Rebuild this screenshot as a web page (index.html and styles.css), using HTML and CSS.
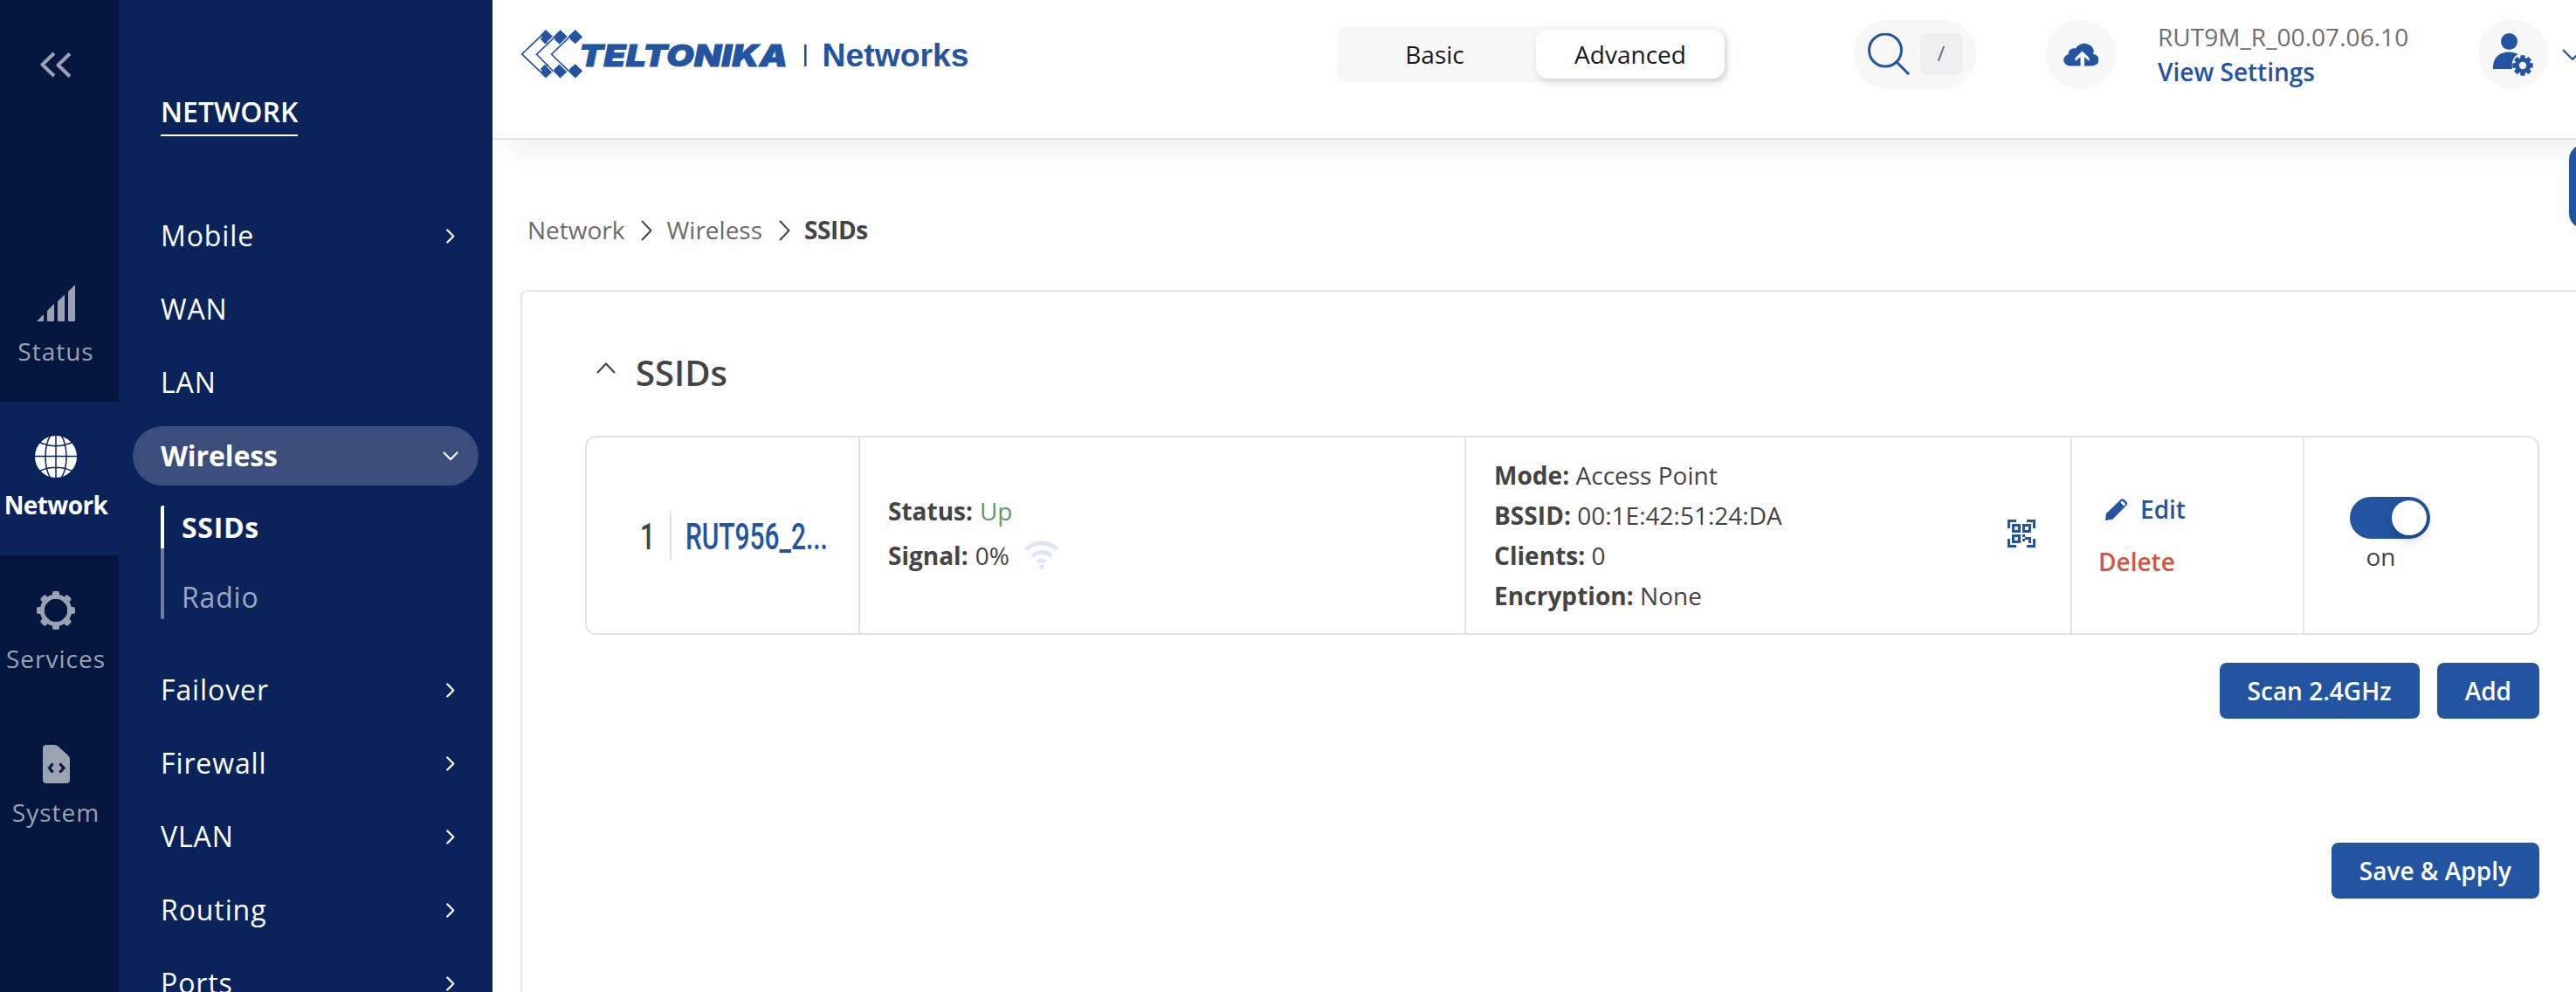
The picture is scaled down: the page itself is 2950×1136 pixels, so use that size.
FILE: index.html
```html
<!DOCTYPE html>
<html lang="en">
<head>
<meta charset="utf-8">
<title>Wireless SSIDs - Teltonika Networks</title>
<link rel="stylesheet" href="styles.css">
</head>
<body>
<svg width="0" height="0" class="defs" aria-hidden="true">
  <symbol id="chev-right" viewBox="0 0 10 17"><path d="M1.3 1.5 8.3 8.5 1.3 15.5" fill="none" stroke="currentColor" stroke-width="2.2" stroke-linecap="round" stroke-linejoin="round"/></symbol>
  <symbol id="crumb" viewBox="0 0 13 24"><path d="M1 1 11.5 12 1 23" fill="none" stroke="currentColor" stroke-width="2"/></symbol>
</svg>
<div class="app">
  <nav class="rail">
    <a class="collapse"><svg width="36" height="30" viewBox="0 0 36 30"><path d="M16 2 2.5 15 16 28M34 2.500 20.500 15.500 34 28.500" fill="none" stroke="currentColor" stroke-width="4" stroke-linejoin="round" stroke-linecap="butt"/></svg></a>
    <a class="rail-item">
      <span class="rail-icon"><svg width="45" height="42" viewBox="0 0 45 42"><path d="M0 42 8 34V41Q8 42 7 42ZM12 30 20 22V41Q20 42 19 42H13Q12 42 12 41ZM24 19 32 11.500V41Q32 42 31 42H25Q24 42 24 41ZM36 8 44 0V41Q44 42 43 42H37Q36 42 36 41Z" fill="currentColor"/></svg></span>
      <span>Status</span>
    </a>
    <a class="rail-item active">
      <span class="rail-icon"><svg width="48" height="48" viewBox="0 0 48 48"><circle cx="24" cy="24" r="24" fill="#fff"/><path d="M24 0V48M0 23.500H48M17.500 0Q12 9 12 24T17.500 48M30.500 0Q36 9 36 24T30.500 48M5 7.500Q24 16 43 7.500M5 40.500Q24 32 43 40.500" fill="none" stroke="#0b235b" stroke-width="1.500"/></svg></span>
      <span>Network</span>
    </a>
    <a class="rail-item">
      <span class="rail-icon"><svg width="46" height="46" viewBox="-23 -23 46 46"><g fill="currentColor"><g id="teeth"><rect x="-4" y="-22" width="8" height="9" rx="2"/><rect x="-4" y="13" width="8" height="9" rx="2"/><rect x="-22" y="-4" width="9" height="8" rx="2"/><rect x="13" y="-4" width="9" height="8" rx="2"/></g><use href="#teeth" transform="rotate(45)"/></g><circle r="15.700" fill="none" stroke="currentColor" stroke-width="5"/></svg></span>
      <span>Services</span>
    </a>
    <a class="rail-item">
      <span class="rail-icon"><svg width="31" height="44" viewBox="0 0 31 44"><path d="M4 0H13Q16 0 18 2L29 12Q31 14 31 16V40Q31 44 27 44H4Q0 44 0 40V4Q0 0 4 0Z" fill="currentColor"/><path d="M11.500 21.500 7.500 26.500 11.500 31.500M19.500 21.500 24 26.500 19.500 31.500" fill="none" stroke="#05173f" stroke-width="3.200"/></svg></span>
      <span>System</span>
    </a>
  </nav>

  <aside class="side">
    <h2 class="side-title">NETWORK</h2>
    <a class="side-item">Mobile<svg width="10" height="17"><use href="#chev-right"/></svg></a>
    <a class="side-item">WAN</a>
    <a class="side-item">LAN</a>
    <a class="side-item open">Wireless<svg width="18" height="11" viewBox="0 0 18 11"><path d="M1.500 1.500 9 9 16.500 1.500" fill="none" stroke="currentColor" stroke-width="2.200" stroke-linecap="round" stroke-linejoin="round"/></svg></a>
    <div class="sub">
      <a class="sub-item current">SSIDs</a>
      <a class="sub-item">Radio</a>
    </div>
    <a class="side-item">Failover<svg width="10" height="17"><use href="#chev-right"/></svg></a>
    <a class="side-item">Firewall<svg width="10" height="17"><use href="#chev-right"/></svg></a>
    <a class="side-item">VLAN<svg width="10" height="17"><use href="#chev-right"/></svg></a>
    <a class="side-item">Routing<svg width="10" height="17"><use href="#chev-right"/></svg></a>
    <a class="side-item">Ports<svg width="10" height="17"><use href="#chev-right"/></svg></a>
  </aside>

  <main class="main">
    <header class="top">
      <svg class="logo" width="516" height="58" viewBox="0 0 516 58">
        <g transform="scale(.3325) translate(-15 -39)">
          <path d="M105 42 131 67 155 43 181 67 207 42 232 67 207 91 183 70 155 95 131 72 105 95 81 67ZM105 209 131 184 155 209 181 184 207 209 232 184 207 160 183 180 155 158 131 181 105 158 81 184Z" fill="#2254a1"/>
          <path d="M88 64 23 126 88 188M133 70 74 127 130 184M186 68 125 127 184 184" fill="none" stroke="#fff" stroke-width="12"/>
          <path d="M88 64 23 126 88 188M133 70 74 127 130 184M186 68 125 127 184 184" fill="none" stroke="#2254a1" stroke-width="5"/>
          <path d="M103 82 113 91M103 170 113 161" stroke="#2254a1" stroke-width="4"/>
        </g>
        <text x="68" y="43" class="logo-main" textLength="239" lengthAdjust="spacingAndGlyphs">TELTONIKA</text>
        <rect x="326" y="18" width="2.600" height="25" fill="#2254a1"/>
        <text x="346.500" y="43" class="logo-sub" textLength="168" lengthAdjust="spacingAndGlyphs">Networks</text>
      </svg>
      <div class="segment"><span>Basic</span><span class="on">Advanced</span></div>
      <div class="search">
        <svg width="48" height="48" viewBox="0 0 48 48"><circle cx="20" cy="19.500" r="18.500" fill="none" stroke="#2254a1" stroke-width="3"/><path d="M33 33 47 47" stroke="#2254a1" stroke-width="3"/></svg>
        <kbd>/</kbd>
      </div>
      <div class="round cloud"><svg width="40" height="27" viewBox="0 0 40 33" preserveAspectRatio="none"><path d="M8 32.500A8.500 8.500 0 0 1 6 16 6.500 6.500 0 0 1 14 8 10.200 10.200 0 0 1 34 15.500 8.600 8.600 0 0 1 32 32.500H24V20L29.500 26V21L21.500 11.500 13.500 21V26L19.500 20V32.500Z" fill="#2254a1"/></svg></div>
      <div class="device"><span>RUT9M_R_00.07.06.10</span><a>View Settings</a></div>
      <div class="round user"><svg width="47" height="49" viewBox="0 0 47 49"><g fill="#2254a1"><circle cx="18.500" cy="9.500" r="9.500"/><path d="M0 41V38Q1 22 19 21.500 24 21.500 28.500 24 20 29 22 41Z"/><g transform="translate(34 37)"><g id="cog"><rect x="-2.700" y="-11.700" width="5.400" height="23.400" rx="1"/><rect x="-11.700" y="-2.700" width="23.400" height="5.400" rx="1"/></g><use href="#cog" transform="rotate(45)"/><circle r="9"/></g></g><circle cx="34" cy="37" r="4.200" fill="#f7f7f7"/></svg></div>
      <svg class="user-chev" width="26" height="13" viewBox="0 0 26 13"><path d="M1 1 12 12 23 1" fill="none" stroke="#2254a1" stroke-width="2.200"/></svg>
    </header>
    <button class="edge-tab" aria-label="Panel"></button>

    <div class="crumbs">
      <span>Network</span><svg width="13" height="24"><use href="#crumb"/></svg><span>Wireless</span><svg width="13" height="24"><use href="#crumb"/></svg><b>SSIDs</b>
    </div>

    <section class="card">
      <h1><svg width="22" height="13" viewBox="0 0 22 13"><path d="M1 12 11 1.500 21 12" fill="none" stroke="#444" stroke-width="2.200"/></svg>SSIDs</h1>
      <div class="row">
        <div class="cell name"><span class="idx">1</span><span class="bar"></span><a class="ssid"><span>RUT956_2...</span></a></div>
        <div class="cell status">
          <p><b>Status:</b> <span class="up">Up</span></p>
          <p><b>Signal:</b> 0%<svg width="40" height="34" viewBox="0 0 40 34"><g fill="none" stroke="#dee5f2" stroke-width="4.600"><path d="M1.800 11.500A25.500 25.500 0 0 1 38.200 11.500M9 19A15.500 15.500 0 0 1 31 19M15.500 25.500A6.500 6.500 0 0 1 24.500 25.500"/></g><circle cx="20" cy="31" r="2.700" fill="#dee5f2"/></svg></p>
        </div>
        <div class="cell info">
          <div>
            <p><b>Mode:</b> Access Point</p>
            <p><b>BSSID:</b> 00:1E:42:51:24:DA</p>
            <p><b>Clients:</b> 0</p>
            <p><b>Encryption:</b> None</p>
          </div>
          <svg width="32" height="32" viewBox="0 0 32 32"><g fill="none" stroke="#2254a1" stroke-width="3"><path d="M10 1.500H1.500V10M22 1.500H30.500V10M1.500 22V30.500H10M30.500 22V30.500H22M6.500 6.500h7v7h-7ZM18.500 6.500h7v7h-7ZM6.500 18.500h7v7h-7Z"/></g><path d="M17 17h3v3h-3ZM17 22h3v3h-3ZM20 20h7v7h-3v-4h-4Z" fill="#2254a1"/></svg>
        </div>
        <div class="cell actions">
          <a class="edit"><svg width="26" height="25" viewBox="0 0 26 25"><path d="M0 25 1 17 17.500 1.200Q19.500-.500 21.500 1L24.500 4Q26 6 24.500 7.500L8.500 23.500Z" fill="#2254a1"/><path d="M17.200 4.500 19.500 2.500 23.500 6.500 21.300 8.500Z" fill="#fff"/></svg>Edit</a>
          <a class="delete">Delete</a>
        </div>
        <div class="cell toggle"><span class="switch"><i></i></span><span>on</span></div>
      </div>
      <div class="buttons"><button>Scan 2.4GHz</button><button>Add</button></div>
      <div class="buttons save"><button>Save &amp; Apply</button></div>
    </section>
  </main>
</div>
</body>
</html>
```
FILE: styles.css
```css
* { box-sizing: border-box; }
body {
  margin: 0;
  background: #fefefe;
  color: #444;
  font: 28px/38px "Open Sans", "Noto Sans", sans-serif;
  overflow: hidden;
}
.defs { display: block; position: absolute; }
svg { display: block; flex: none; }
p, h1, h2 { margin: 0; }
.app { display: flex; height: 1136px; overflow: hidden; }

/* Icon rail */
.rail { width: 136px; flex: none; background: #05173f; color: #9ba2b2; padding-right: 8px; }
.collapse { display: flex; height: 284px; padding: 59px 0 0 46px; }
.rail-item {
  height: 176px;
  display: flex;
  flex-direction: column;
  align-items: center;
  letter-spacing: 1px;
  white-space: nowrap;
}
.rail-icon { height: 48px; margin: 39px 0 12px; display: flex; align-items: center; }
.rail-item.active {
  background: #0b235b;
  color: #fff;
  font-weight: 700;
  letter-spacing: -.6px;
  margin-right: -8px;
  padding-right: 8px;
}

/* Section menu */
.side { width: 428px; flex: none; background: #0b235b; color: #fff; padding: 104px 16px 0; }
.side-title {
  width: fit-content;
  margin: 0 0 80px 32px;
  height: 52px;
  border-bottom: 2px solid #fff;
  font-size: 32px;
  line-height: 48px;
  font-weight: 600;
}
.side-item {
  display: flex;
  align-items: center;
  justify-content: space-between;
  height: 68px;
  margin-top: 16px;
  padding: 0 27px 0 32px;
  border-radius: 34px;
  font-size: 32px;
  letter-spacing: .9px;
}
.side-title + .side-item { margin-top: 0; }
.side-item.open { background: #3b4d7b; font-weight: 700; letter-spacing: -.1px; padding-right: 23px; }
.sub { margin: 23px 0 47px 32px; font-size: 32px; }
.sub-item {
  display: flex;
  align-items: center;
  height: 81px;
  padding: 31px 0 0 20px;
  border-left: 4px solid #6d7b9d;
  color: #9da7be;
  letter-spacing: .8px;
  border-radius: 0 0 2px 2px;
}
.sub-item.current { height: 49px; padding-top: 0; border-color: #fff; border-radius: 2px 2px 0 0; color: #fff; font-weight: 700; letter-spacing: .7px; }

/* Header */
.main { flex: 1; min-width: 0; position: relative; overflow: hidden; }
.top {
  height: 160px;
  border-bottom: 2px solid #e3e3e3;
  box-shadow: 20px 4px 36px rgba(0, 0, 0, .09);
  background: #fefefe;
  display: flex;
  padding: 22px 0 56px 31px;
  align-items: center;
  position: relative;
}
.logo { margin-right: 420px; }
.logo-main { font: italic 900 34.500px Inter, sans-serif; fill: #2254a1; stroke: #2254a1; stroke-width: .8px; }
.logo-sub { font: 700 36px "Liberation Sans", Arial, sans-serif; fill: #2254a1; }
.segment {
  display: flex;
  flex: none;
  width: 448px;
  height: 64px;
  padding: 4px;
  border-radius: 14px;
  background: #f7f7f7;
  color: #181818;
}
.segment span { flex: none; width: 224px; line-height: 56px; text-align: center; }
.segment span:first-child { padding-right: 8px; }
.segment .on { width: 216px; background: #fefefe; border-radius: 14px; box-shadow: 2px 4px 8px rgba(0, 0, 0, .15); }
.search {
  flex: none;
  display: flex;
  align-items: center;
  gap: 12px;
  width: 140px;
  height: 80px;
  margin-left: 144px;
  padding: 0 16px;
  border-radius: 40px;
  background: #f7f7f7;
}
kbd { width: 48px; height: 48px; border-radius: 8px; background: #edeef0; color: #6b6b6b; font: 24px/46px "Open Sans", sans-serif; text-align: center; }
.round { flex: none; width: 80px; height: 80px; border-radius: 50%; background: #f7f7f7; display: flex; align-items: center; justify-content: center; }
.cloud { margin-left: 80px; }
.device { flex: none; width: 367px; margin-left: 48px; line-height: 40px; color: #6f6f6f; white-space: nowrap; letter-spacing: .05px; }
.device span { display: block; }
.device a { color: #2254a1; font-weight: 600; letter-spacing: 0; }
.user svg { margin-left: 1px; }
.user-chev { margin-left: 16px; }
.edge-tab { position: absolute; left: 2378px; top: 165px; width: 80px; height: 97px; border: 0; border-radius: 18px; background: #2254a1; }

/* Content */
.crumbs { display: flex; align-items: center; height: 38px; margin: 84px 0 50px 40px; color: #6b6b6b; }
.crumbs span { margin-top: -1px; }
.crumbs svg { margin: 2px 16px 0 19px; color: #444; }
.crumbs b { margin-top: -1px; color: #444; font-weight: 700; letter-spacing: -.4px; }
.card { width: 2400px; height: 900px; margin-left: 32px; padding: 62px 0 0 72px; border: 2px solid #e3e5ec; border-radius: 8px; background: #fefefe; }
h1 { display: flex; height: 60px; font-size: 40px; line-height: 62px; font-weight: 600; margin-left: 13px; }
h1 svg { margin: 19px 23px 0 0; }
.row { display: grid; grid-template-columns: 313px 694px 694px 266px 1fr; width: 2238px; height: 228px; margin-top: 43px; border: 2px solid #e3e3e3; border-radius: 13px; }
.cell { display: flex; border-right: 2px solid #e3e3e3; min-width: 0; white-space: nowrap; }
.cell:last-child { border: 0; }
.name { font: 500 43px/56px Roboto, sans-serif; padding: 85px 0 0 61px; }
.idx { width: 30px; flex: none; transform: scaleX(.7); transform-origin: 0 0; }
.bar { flex: none; width: 2px; height: 56px; background: #e3e3e3; margin: -1px 16px 0 4px; }
.ssid { width: 164px; color: #2254a1; }
.ssid span { display: inline-block; transform: scaleX(.695); transform-origin: 0 0; }
.status { flex-direction: column; padding: 65px 0 0 32px; }
.status p { display: flex; height: 51px; gap: 8px; }
.status svg { margin: 1px 0 0 9px; }
.up { color: #5b9c6c; }
.info { justify-content: space-between; padding: 20px 40px 0 32px; }
.info p { line-height: 46px; }
.info svg { margin-top: 74px; }
.info b, .status b { font-weight: 700; }
.info b { letter-spacing: .05px; }
.actions { flex-direction: column; padding: 63px 0 0 30px; font-weight: 600; }
.edit { display: flex; color: #2254a1; margin-bottom: 22px; }
.edit svg { margin: 7px 14px 0 8px; }
.delete { color: #cd5741; }
.toggle { flex-direction: column; padding: 68px 0 0 52px; }
.toggle > span:last-child { width: 71px; text-align: center; margin-top: 1px; line-height: 38px; }
.switch { width: 92px; height: 48px; padding: 4px; border-radius: 24px; background: #2254a1; display: flex; justify-content: flex-end; }
.switch i { width: 40px; height: 40px; border-radius: 50%; background: #fefefe; box-shadow: 0 5px 10px rgba(0, 0, 0, .2); }
.buttons { display: flex; justify-content: flex-end; gap: 20px; width: 2238px; margin-top: 32px; }
.buttons button { height: 64px; padding: 0 32px; border: 0; border-radius: 8px; background: #2254a1; color: #fff; font: 600 28px "Open Sans", sans-serif; }
.buttons.save { margin-top: 142px; }
```
